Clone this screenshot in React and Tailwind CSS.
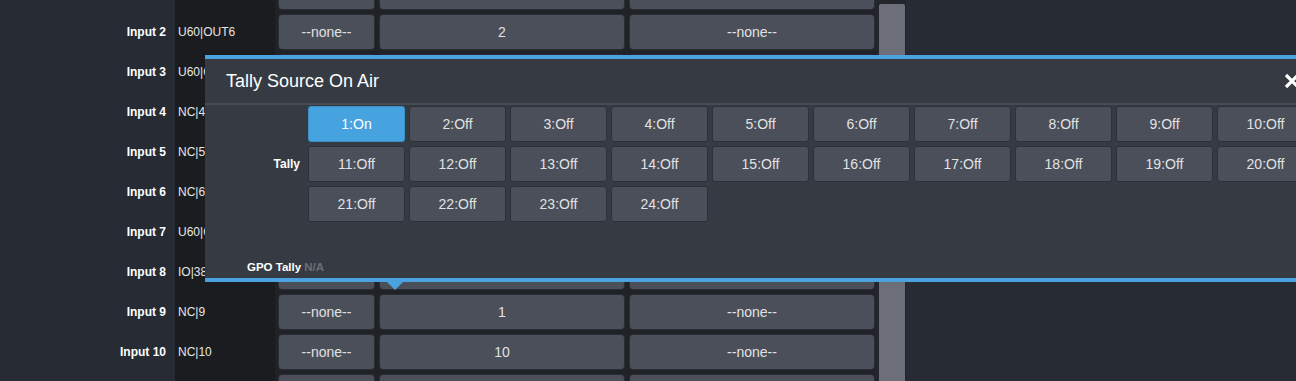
import React from 'react';

const rows = [
  { label: 'Input 1', value: 'U60|OUT5', num: '5' },
  { label: 'Input 2', value: 'U60|OUT6', num: '2' },
  { label: 'Input 3', value: 'U60|OUT7', num: '3' },
  { label: 'Input 4', value: 'NC|4', num: '4' },
  { label: 'Input 5', value: 'NC|5', num: '5' },
  { label: 'Input 6', value: 'NC|6', num: '6' },
  { label: 'Input 7', value: 'U60|OUT8', num: '7' },
  { label: 'Input 8', value: 'IO|38', num: '8' },
  { label: 'Input 9', value: 'NC|9', num: '1' },
  { label: 'Input 10', value: 'NC|10', num: '10' },
  { label: 'Input 11', value: 'NC|11', num: '11' },
];

const tallies = Array.from({ length: 24 }, (_, i) => ({
  id: i + 1,
  on: i === 0,
}));

function GridButton({ children }) {
  return (
    <div className="flex h-[36px] items-center justify-center rounded-[4px] border border-[#2a2d33] bg-[#4a4f5a] text-[14px] text-[#e2e2e2]">
      {children}
    </div>
  );
}

export default function App() {
  return (
    <div className="relative h-[381px] w-[1296px] overflow-hidden bg-[#272b33] font-['Liberation_Sans',Arial,sans-serif]">
      <div className="flex h-[381px]">
        {/* Labels */}
        <div className="w-[175px] -mt-[28px]">
          {rows.map((r) => (
            <div key={r.label} className="flex h-[40px] items-center justify-end pr-[9px] text-[12px] font-bold text-white">
              {r.label}
            </div>
          ))}
        </div>

        {/* Sources */}
        <div className="w-[100px] overflow-hidden bg-[#1b1c1f]">
          <div className="-mt-[28px]">
            {rows.map((r) => (
              <div key={r.label} className="flex h-[40px] items-center whitespace-nowrap pl-[3px] text-[12px] text-[#e6e6e6]">
                {r.value}
              </div>
            ))}
          </div>
        </div>

        {/* Assignment grid */}
        <div className="w-[600px] overflow-hidden bg-[#1f2227] pl-[3px]">
          <div className="-mt-[28px]">
            {rows.map((r) => (
              <div key={r.label} className="grid h-[40px] grid-cols-[97px_246px_246px] gap-x-[4px] py-[2px]">
                <GridButton>--none--</GridButton>
                <GridButton>{r.num}</GridButton>
                <GridButton>--none--</GridButton>
              </div>
            ))}
          </div>
        </div>

        {/* Scrollbar */}
        <div className="w-[31px] bg-[#22252b] pl-[4px] pr-[1px] pt-[4px]">
          <div className="h-full rounded-t-[2px] bg-[#6c6f79]" />
        </div>
      </div>

      {/* Tally popup */}
      <div className="absolute left-[205px] top-[55px] w-[1110px] border-y-4 border-[#4aa3df] bg-[#363b43]">
        <div className="flex h-[46px] items-center justify-between border-b-2 border-[#474c54] pl-[21px] pr-[15px]">
          <span className="text-[18px] text-white">Tally Source On Air</span>
          <svg width="16" height="16" viewBox="0 0 16 16">
            <path d="M2 2 L14 14 M14 2 L2 14" stroke="#ffffff" strokeWidth="3.2" />
          </svg>
        </div>

        <div className="flex pt-[1px]">
          <div className="flex w-[103px] items-center justify-end pr-[8px] text-[12px] font-bold text-white">
            Tally
          </div>
          <div className="grid grid-cols-[repeat(10,97px)] gap-[4px]">
            {tallies.map((t) => (
              <div
                key={t.id}
                className={
                  t.on
                    ? 'flex h-[36px] items-center justify-center rounded-[3px] border border-[#3d8fc7] bg-[#47a3e0] text-[14px] text-white'
                    : 'flex h-[36px] items-center justify-center rounded-[3px] border border-[#2d3138] bg-[#4a4f5a] text-[14px] text-[#e2e2e2]'
                }
              >
                {t.id}:{t.on ? 'On' : 'Off'}
              </div>
            ))}
          </div>
        </div>

        <div className="mt-[38px] pb-[4px] pl-[42px] text-[11.5px] font-bold leading-[14px]">
          <span className="text-white">GPO Tally</span>{' '}
          <span className="text-[#6b6f77]">N/A</span>
        </div>

        <div className="absolute -bottom-[12px] left-[182px] h-0 w-0 border-x-[8px] border-t-[8px] border-x-transparent border-t-[#4aa3df]" />
      </div>
    </div>
  );
}
